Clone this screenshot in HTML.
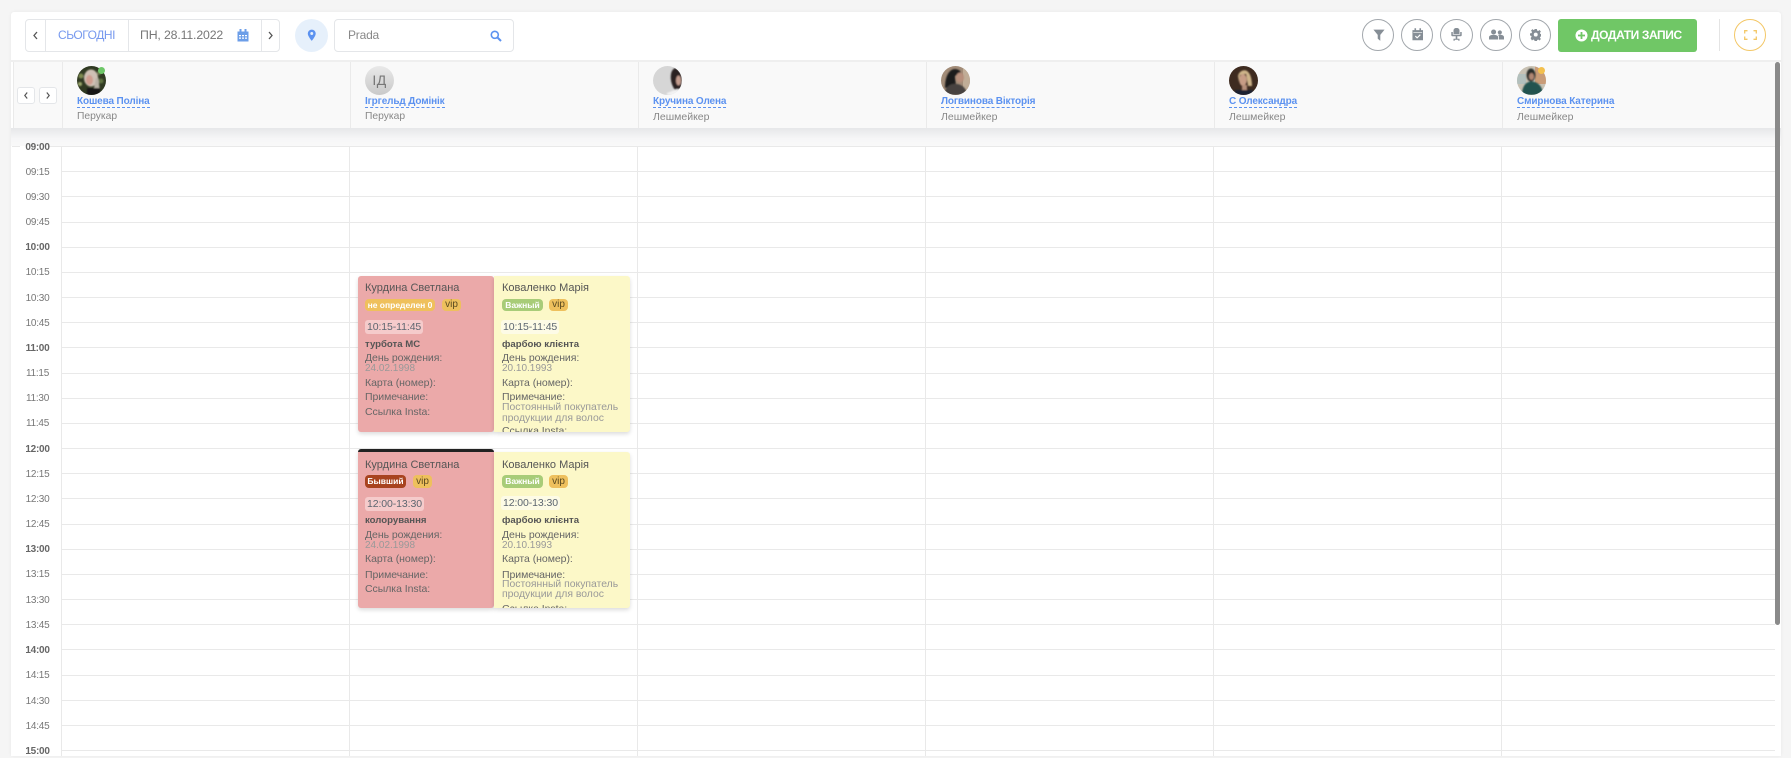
<!DOCTYPE html>
<html><head><meta charset="utf-8">
<style>
html,body{margin:0;padding:0;width:1791px;height:756px;overflow:hidden;background:#f5f5f5;font-family:"Liberation Sans",sans-serif;color:#555}
div,span,svg{position:absolute}
#card{left:11px;top:12px;width:1770px;height:744px;background:#fff;border-radius:3px 3px 0 0;box-shadow:0 0 3px rgba(0,0,0,.06)}
.b{box-sizing:border-box;border:1px solid #e4e6e9}
.t{white-space:nowrap;line-height:14px}
.hg{left:61px;width:1714px;height:1px;background:#e9e9e9}
.v{top:146px;height:610px;width:1px;background:#e9e9e9}
.lb{left:14px;width:47px;text-align:center;font-size:10px;letter-spacing:-.25px;color:#777;line-height:13px}
.lb.s{font-weight:bold;color:#666}
.vh{top:62px;height:66px;width:1px;background:#eaeaea}
.n{font-size:10px;color:#5c92f0;top:96px;height:11px;line-height:12px;white-space:nowrap;border-bottom:1px dashed #5c92f0;font-weight:bold;letter-spacing:-.13px}
.r{font-size:10.5px;color:#888;top:110px;line-height:14px;white-space:nowrap}
.circ{box-sizing:border-box;width:32px;height:32px;border:1px solid #a2a7ac;border-radius:50%;top:19px}
.ev{overflow:hidden;box-shadow:0 2px 4px rgba(0,0,0,.14)}
.ev .t{left:7px}
.ti{font-size:11px;color:#555}
.lab{font-size:10.5px;color:#666;letter-spacing:-.05px;margin-top:-1px}
.val{font-size:10.4px;color:#999}
.sv{font-size:9.6px;font-weight:bold;color:#555}
.tm{font-size:10.5px;color:#5d6670;border-radius:3px;padding:0 2px;height:14px;margin-left:0;letter-spacing:-.1px}
.tag{font-size:8.5px;line-height:13px;height:13px;border-radius:4px;text-align:center;font-weight:bold;color:#fff;white-space:nowrap}
.vip{background:#eec05d;color:#5a4a20;font-weight:normal;font-size:10px}
</style></head><body>
<div id="card"></div>

<!-- toolbar left -->
<div class="b" style="left:25px;top:19px;width:255px;height:33px;border-radius:4px"></div>
<div style="left:45px;top:20px;width:1px;height:31px;background:#e4e6e9"></div>
<div style="left:128px;top:20px;width:1px;height:31px;background:#e4e6e9"></div>
<div style="left:261px;top:20px;width:1px;height:31px;background:#e4e6e9"></div>
<svg style="left:32px;top:31px" width="7" height="9" viewBox="0 0 7 9"><path d="M5 1L2 4.500 5 8" fill="none" stroke="#555" stroke-width="1.300"/></svg>
<svg style="left:267px;top:31px" width="7" height="9" viewBox="0 0 7 9"><path d="M2 1l3 3.500L2 8" fill="none" stroke="#555" stroke-width="1.300"/></svg>
<div class="t" style="left:58px;top:28px;font-size:12px;color:#7799ee;letter-spacing:-.45px">СЬОГОДНІ</div>
<div class="t" style="left:140px;top:28px;font-size:12.3px;color:#777;letter-spacing:-.15px">ПН, 28.11.2022</div>
<svg style="left:237px;top:29px" width="12" height="13" viewBox="0 0 12 13"><path d="M0.500 2.500h11v10h-11zM2.500 0h2v3h-2zM7.500 0h2v3h-2z" fill="#6c9ee8"/><path d="M2 6h2v1.300H2zM5 6h2v1.300H5zM8 6h2v1.300H8zM2 8.500h2v1.300H2zM5 8.500h2v1.300H5zM8 8.500h2v1.300H8z" fill="#fff"/></svg>
<div style="left:295px;top:19px;width:33px;height:33px;border-radius:50%;background:#e6f0fb"></div>
<svg style="left:307px;top:29px" width="9.500" height="12.500" viewBox="0 0 11 14"><path d="M5.500 0.500a4.600 4.600 0 0 1 4.600 4.600c0 3-4.600 8.400-4.600 8.400S.9 8.100.9 5.100A4.600 4.600 0 0 1 5.500.5z" fill="#5c92f0"/><circle cx="5.500" cy="5" r="1.700" fill="#e6f0fb"/></svg>
<div class="b" style="left:334px;top:19px;width:180px;height:33px;border-radius:4px"></div>
<div class="t" style="left:348px;top:28px;font-size:12px;color:#888;letter-spacing:-.2px">Prada</div>
<svg style="left:490px;top:30px" width="12" height="12" viewBox="0 0 12 12"><circle cx="4.800" cy="4.800" r="3.500" fill="none" stroke="#5c92f0" stroke-width="1.600"/><path d="M7.500 7.500L11 11" stroke="#5c92f0" stroke-width="2"/></svg>

<!-- toolbar right -->
<div class="circ" style="left:1362px"></div>
<svg style="left:1372.500px;top:28.500px" width="12" height="12.500" viewBox="0 0 14 14"><path d="M0.500 0.500h13L8.500 6.500V13.500L5.500 11V6.500z" fill="#868e96"/></svg>
<div class="circ" style="left:1401px"></div>
<svg style="left:1411.500px;top:28px" width="11.500" height="13" viewBox="0 0 13 14"><path d="M0.500 2h12v11.500H.5zM2.800 0h1.800v3H2.800zM8.400 0h1.800v3H8.400z" fill="#868e96"/><path d="M1.500 4.400h10v.7h-10z" fill="#fff"/><path d="M3.800 8.800l2 2 3.600-3.600" fill="none" stroke="#fff" stroke-width="1.300"/></svg>
<div class="circ" style="left:1440px;width:33px"></div>
<svg style="left:1451px;top:28px" width="11" height="13" viewBox="0 0 11 13"><path d="M2.500 2.500a2.500 2.500 0 0 1 2.500-2.500h1a2.500 2.500 0 0 1 2.500 2.500V6h-6zM0.300 4h1.500v2.600h7.400V4h1.500v3.200q0 1-1 1H1.300q-1 0-1-1zM4.700 8.200h1.600v2.600H4.700zM2.500 10.800h6V12.800h-1.200v-1H3.700v1H2.500z" fill="#868e96"/></svg>
<div class="circ" style="left:1480px"></div>
<svg style="left:1489px;top:29px" width="15" height="11" viewBox="0 0 18 13"><circle cx="5.500" cy="3.500" r="3" fill="#868e96"/><circle cx="13" cy="4" r="2.500" fill="#868e96"/><path d="M0 12.500V10c0-2 2-3 5.500-3S11 8 11 10v2.500z" fill="#868e96"/><path d="M12 12.500V10c0-1.200-.4-2.200-1.200-3 .6-.1 1.400-.2 2.200-.2 3 0 5 1 5 3v2.700z" fill="#868e96"/></svg>
<div class="circ" style="left:1519px"></div>
<svg style="left:1529.500px;top:29px" width="11.500" height="11.500" viewBox="0 0 13 13"><path d="M5.200 0h2.600l.3 1.800 1.200.5L10.800 1.200l1.500 1.700-1.100 1.500.5 1.200 1.800.300v2.400l-1.800.3-.5 1.200 1.100 1.500-1.500 1.700-1.500-1.100-1.200.5-.3 1.800H5.200l-.3-1.800-1.200-.5-1.500 1.100L.7 10.300l1.100-1.500-.5-1.200L0 7.300V4.900l1.800-.3.500-1.200L1.200 1.900 2.700.2 4.200 1.300l.8-.5z" fill="#868e96"/><circle cx="6.500" cy="6.300" r="2.200" fill="#fff"/></svg>
<div style="left:1558px;top:19px;width:139px;height:33px;background:#70c766;border-radius:3px"></div>
<svg style="left:1575px;top:29px" width="13" height="13" viewBox="0 0 13 13"><circle cx="6.500" cy="6.500" r="6" fill="#fff"/><path d="M6.500 3v7M3 6.500h7" stroke="#70c766" stroke-width="1.800"/></svg>
<div class="t" style="left:1591px;top:28px;font-size:12px;color:#fff;font-weight:bold;letter-spacing:-.4px">ДОДАТИ ЗАПИС</div>
<div style="left:1719px;top:19px;width:1px;height:32px;background:#e4e4e4"></div>
<div class="circ" style="left:1734px;border-color:#f3c766"></div>
<svg style="left:1744px;top:30px" width="13" height="10" viewBox="0 0 13 10"><path d="M.7 3.500V.7H3.500M9.500.7h2.800v2.800M12.300 6.500v2.800H9.500M3.500 9.300H.7V6.500" fill="none" stroke="#f3c766" stroke-width="1.300"/></svg>

<!-- header shadow -->
<div style="left:11px;top:128px;width:1770px;height:18px;background:linear-gradient(#e6e7e9,#f6f6f7 60%,#f9f9f9)"></div>

<!-- grid -->
<div class="hg" style="left:12px;width:8px;top:146px"></div><div class="hg" style="left:48px;top:146px;width:1727px"></div>
<div class="hg" style="top:171px"></div><div class="hg" style="top:196px"></div><div class="hg" style="top:222px"></div><div class="hg" style="top:247px"></div><div class="hg" style="top:272px"></div><div class="hg" style="top:297px"></div><div class="hg" style="top:322px"></div><div class="hg" style="top:347px"></div><div class="hg" style="top:373px"></div><div class="hg" style="top:398px"></div><div class="hg" style="top:423px"></div><div class="hg" style="top:448px"></div><div class="hg" style="top:473px"></div><div class="hg" style="top:498px"></div><div class="hg" style="top:524px"></div><div class="hg" style="top:549px"></div><div class="hg" style="top:574px"></div><div class="hg" style="top:599px"></div><div class="hg" style="top:624px"></div><div class="hg" style="top:649px"></div><div class="hg" style="top:675px"></div><div class="hg" style="top:700px"></div><div class="hg" style="top:725px"></div><div class="hg" style="top:750px"></div>
<div class="v" style="left:61px"></div><div class="v" style="left:349px"></div><div class="v" style="left:637px"></div><div class="v" style="left:925px"></div><div class="v" style="left:1213px"></div><div class="v" style="left:1501px"></div>

<div class="lb s" style="top:141px">09:00</div>
<div class="lb" style="top:166px">09:15</div>
<div class="lb" style="top:191px">09:30</div>
<div class="lb" style="top:216px">09:45</div>
<div class="lb s" style="top:241px">10:00</div>
<div class="lb" style="top:266px">10:15</div>
<div class="lb" style="top:292px">10:30</div>
<div class="lb" style="top:317px">10:45</div>
<div class="lb s" style="top:342px">11:00</div>
<div class="lb" style="top:367px">11:15</div>
<div class="lb" style="top:392px">11:30</div>
<div class="lb" style="top:417px">11:45</div>
<div class="lb s" style="top:443px">12:00</div>
<div class="lb" style="top:468px">12:15</div>
<div class="lb" style="top:493px">12:30</div>
<div class="lb" style="top:518px">12:45</div>
<div class="lb s" style="top:543px">13:00</div>
<div class="lb" style="top:568px">13:15</div>
<div class="lb" style="top:594px">13:30</div>
<div class="lb" style="top:619px">13:45</div>
<div class="lb s" style="top:644px">14:00</div>
<div class="lb" style="top:669px">14:15</div>
<div class="lb" style="top:695px">14:30</div>
<div class="lb" style="top:720px">14:45</div>
<div class="lb s" style="top:745px">15:00</div>

<!-- header -->
<div style="left:11px;top:60px;width:1770px;height:2px;background:#efefef"></div>
<div style="left:13px;top:62px;width:1762px;height:66px;background:#f9f9f9"></div>
<div class="vh" style="left:13px"></div><div class="vh" style="left:62px"></div><div class="vh" style="left:350px"></div><div class="vh" style="left:638px"></div><div class="vh" style="left:926px"></div><div class="vh" style="left:1214px"></div><div class="vh" style="left:1502px"></div>
<div class="b" style="left:17px;top:87px;width:18px;height:17px;border-radius:3px;background:#fff"></div>
<div class="b" style="left:39px;top:87px;width:18px;height:17px;border-radius:3px;background:#fff"></div>
<svg style="left:23px;top:91px" width="6" height="9" viewBox="0 0 6 9"><path d="M4.200 1.500L1.800 4.500l2.400 3" fill="none" stroke="#555" stroke-width="1.200"/></svg>
<svg style="left:45px;top:91px" width="6" height="9" viewBox="0 0 6 9"><path d="M1.800 1.500l2.400 3-2.400 3" fill="none" stroke="#555" stroke-width="1.200"/></svg>

<svg style="left:0;top:0;width:0;height:0"><defs><clipPath id="cp"><circle cx="14.500" cy="14.500" r="14.500"/></clipPath><filter id="bl"><feGaussianBlur stdDeviation=".7"/></filter></defs></svg>

<!-- avatar 1 -->
<svg style="left:77px;top:66px" width="29" height="29" viewBox="0 0 29 29"><g clip-path="url(#cp)"><rect width="29" height="29" fill="#303a22"/><g filter="url(#bl)"><circle cx="4" cy="10" r="2.500" fill="#7d8a50"/><circle cx="24" cy="15" r="2.500" fill="#5f7240"/><circle cx="3" cy="18" r="2" fill="#99a56a"/><circle cx="22" cy="7" r="2" fill="#6a7a48"/><ellipse cx="14" cy="12" rx="7" ry="8.500" fill="#cfc0b4"/><ellipse cx="12.500" cy="14" rx="3.500" ry="5" fill="#cf9d8f"/><path d="M19 12l2.500 0 1 10H17z" fill="#b9b2a6"/><rect x="10" y="22" width="13" height="7" fill="#191919"/></g></g></svg>
<div style="left:97.500px;top:66.500px;width:7px;height:7px;border-radius:50%;background:#6ec768"></div>
<div style="left:365px;top:66px;width:29px;height:29px;border-radius:50%;background:linear-gradient(#e9e9e9,#c9c9c9)"></div>
<div class="t" style="left:365px;top:73px;width:29px;text-align:center;font-size:14px;color:#777;letter-spacing:.5px">ІД</div>
<!-- avatar 3 -->
<svg style="left:653px;top:66px" width="29" height="29" viewBox="0 0 29 29"><g clip-path="url(#cp)"><rect width="29" height="29" fill="#d6d6d6"/><g filter="url(#bl)"><path d="M22 2C26 3 29 8 29 14L28 22L22 24C19 20 17 14 18 8C18.500 5 20 3 22 2z" fill="#2a2224"/><ellipse cx="25.500" cy="14.500" rx="2.500" ry="5" fill="#c39c8e"/><path d="M14 27L24 23L28 29H14z" fill="#f2f2f2"/></g></g></svg>
<!-- avatar 4 -->
<svg style="left:941px;top:66px" width="29" height="29" viewBox="0 0 29 29"><g clip-path="url(#cp)"><rect width="29" height="29" fill="#a28c78"/><rect x="22" width="7" height="29" fill="#c0ad97"/><g filter="url(#bl)"><path d="M4 22C4 9 9 3 14 3C17 3 20 5 20 7L14 10L15 20z" fill="#1f1b1b"/><ellipse cx="19" cy="11.500" rx="4" ry="5" fill="#b78f7c"/><path d="M4 29C3 22 9 17 15 18C21 18 26 23 26 29z" fill="#46433f"/></g></g></svg>
<!-- avatar 5 -->
<svg style="left:1229px;top:66px" width="29" height="29" viewBox="0 0 29 29"><g clip-path="url(#cp)"><rect width="29" height="29" fill="#3e2b20"/><g filter="url(#bl)"><path d="M9 10C10 5 15 3 18 5C21 7 23 12 23 20L19 20L17 8L11 9L10 16z" fill="#cdb489"/><ellipse cx="14" cy="14" rx="3.800" ry="6" fill="#c79d86"/><rect x="13" y="19" width="5" height="5" fill="#b58f7a"/><rect x="6" y="24" width="18" height="5" fill="#1b2230"/></g></g></svg>
<!-- avatar 6 -->
<svg style="left:1517px;top:66px" width="29" height="29" viewBox="0 0 29 29"><g clip-path="url(#cp)"><rect width="29" height="29" fill="#c9c2b4"/><rect y="0" x="18" width="11" height="18" fill="#c99c78"/><rect x="0" y="8" width="9" height="10" fill="#b3c0bd"/><g filter="url(#bl)"><ellipse cx="14" cy="9" rx="4.500" ry="6.500" fill="#2a2f2c"/><ellipse cx="14.500" cy="10.500" rx="2.500" ry="3.500" fill="#b08672"/><path d="M5 29C5 20 9 15.500 14.500 15.500C21 15.500 26 21 26 29z" fill="#225350"/></g></g></svg>
<div style="left:1538px;top:66.500px;width:7px;height:7px;border-radius:50%;background:#f3c04e"></div>

<div class="n" style="left:77px">Кошева Поліна</div><div class="r" style="left:77px;font-size:10.3px">Перукар</div>
<div class="n" style="left:365px">Ігргельд Домінік</div><div class="r" style="left:365px;font-size:10.3px">Перукар</div>
<div class="n" style="left:653px">Кручина Олена</div><div class="r" style="left:653px">Лешмейкер</div>
<div class="n" style="left:941px">Логвинова Вікторія</div><div class="r" style="left:941px">Лешмейкер</div>
<div class="n" style="left:1229px">С Олександра</div><div class="r" style="left:1229px">Лешмейкер</div>
<div class="n" style="left:1517px">Смирнова Катерина</div><div class="r" style="left:1517px">Лешмейкер</div>

<div style="left:1775px;top:62px;width:5px;height:563px;background:#8a8a8a;border-radius:3px"></div>

<!-- event 1 red -->
<div class="ev" style="left:358px;top:276px;width:136px;height:156px;background:#eba9a9;border-radius:3px">
<div class="t ti" style="top:5px">Курдина Светлана</div>
<div class="tag" style="left:7px;top:23px;width:70px;height:12px;line-height:12px;background:#efc05c">не определен 0</div>
<div class="tag vip" style="left:84px;top:23px;width:19px;height:12px;line-height:12px">vip</div>
<div class="t tm" style="left:7px;top:44px;background:#f5cbcb">10:15-11:45</div>
<div class="t sv" style="top:62px">турбота МС</div>
<div class="t lab" style="top:76px">День рождения:</div>
<div class="t val" style="top:86px;font-size:10px">24.02.1998</div>
<div class="t lab" style="top:101px">Карта (номер):</div>
<div class="t lab" style="top:115px">Примечание:</div>
<div class="t lab" style="top:130px">Ссылка Insta:</div>
</div>
<!-- event 1 yellow -->
<div class="ev" style="left:494px;top:276px;width:136px;height:156px;background:#fcf8c8;border-radius:0 3px 3px 0">
<div class="t ti" style="left:8px;top:5px">Коваленко Марія</div>
<div class="tag" style="left:8px;top:23px;width:41px;height:12px;line-height:12px;background:#a8cc78">Важный</div>
<div class="tag vip" style="left:55px;top:23px;width:19px;height:12px;line-height:12px">vip</div>
<div class="t tm" style="left:7px;top:44px;background:#fdfbe6">10:15-11:45</div>
<div class="t sv" style="left:8px;top:62px">фарбою клієнта</div>
<div class="t lab" style="left:8px;top:76px">День рождения:</div>
<div class="t val" style="left:8px;top:86px;font-size:10px">20.10.1993</div>
<div class="t lab" style="left:8px;top:101px">Карта (номер):</div>
<div class="t lab" style="left:8px;top:115px">Примечание:</div>
<div class="t val" style="left:8px;top:125px">Постоянный покупатель</div>
<div class="t val" style="left:8px;top:136px">продукции для волос</div>
<div class="t lab" style="left:8px;top:149px">Ссылка Insta:</div>
</div>

<!-- event 2 red -->
<div class="ev" style="left:358px;top:449px;width:136px;height:159px;background:#eba9a9;border-radius:3px;border-top:3px solid #222;box-sizing:border-box">
<div class="t ti" style="top:6px">Курдина Светлана</div>
<div class="tag" style="left:7px;top:23px;width:41px;background:#a8431f">Бывший</div>
<div class="tag vip" style="left:55px;top:23px;width:19px">vip</div>
<div class="t tm" style="left:7px;top:45px;background:#f5cbcb">12:00-13:30</div>
<div class="t sv" style="top:62px">колорування</div>
<div class="t lab" style="top:77px">День рождения:</div>
<div class="t val" style="top:87px;font-size:10px">24.02.1998</div>
<div class="t lab" style="top:101px">Карта (номер):</div>
<div class="t lab" style="top:117px">Примечание:</div>
<div class="t lab" style="top:131px">Ссылка Insta:</div>
</div>
<!-- event 2 yellow -->
<div class="ev" style="left:494px;top:452px;width:136px;height:156px;background:#fcf8c8;border-radius:0 3px 3px 0">
<div class="t ti" style="left:8px;top:6px">Коваленко Марія</div>
<div class="tag" style="left:8px;top:23px;width:41px;background:#a8cc78">Важный</div>
<div class="tag vip" style="left:55px;top:23px;width:19px">vip</div>
<div class="t tm" style="left:7px;top:44px;background:#fdfbe6">12:00-13:30</div>
<div class="t sv" style="left:8px;top:62px">фарбою клієнта</div>
<div class="t lab" style="left:8px;top:77px">День рождения:</div>
<div class="t val" style="left:8px;top:87px;font-size:10px">20.10.1993</div>
<div class="t lab" style="left:8px;top:101px">Карта (номер):</div>
<div class="t lab" style="left:8px;top:117px">Примечание:</div>
<div class="t val" style="left:8px;top:126px">Постоянный покупатель</div>
<div class="t val" style="left:8px;top:136px">продукции для волос</div>
<div class="t lab" style="left:8px;top:151px">Ссылка Insta:</div>
</div>
</body></html>
